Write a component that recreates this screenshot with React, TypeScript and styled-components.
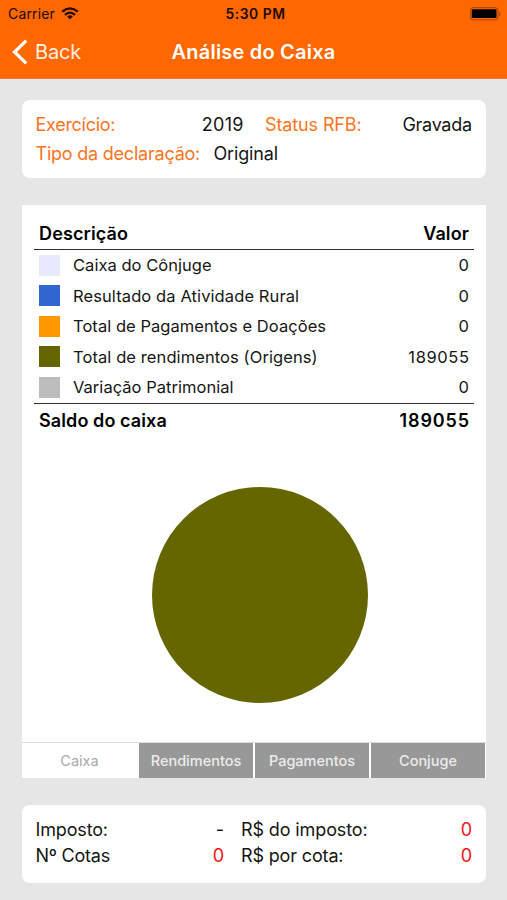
import React from 'react';
import styled, { createGlobalStyle } from 'styled-components';

const GlobalStyle = createGlobalStyle`
  * { box-sizing: border-box; }
  body {
    margin: 0;
    background: #e6e6e6;
    font-family: Inter, 'Liberation Sans', sans-serif;
    color: #161616;
  }
`;

const Screen = styled.div`
  width: 507px;
  height: 900px;
  background: #e6e6e6;
  overflow: hidden;
`;

const Header = styled.header`
  height: 79px;
  background: #ff6700;
  border-bottom: 1px solid #e87a35;
`;

const StatusBar = styled.div`
  display: grid;
  grid-template-columns: 1fr auto 1fr;
  align-items: center;
  height: 27px;
  padding: 0 5px 0 8px;
  color: #210b00;
  font-size: 14px;
`;

const Carrier = styled.div`
  display: flex;
  align-items: center;
  gap: 6px;
  letter-spacing: 0.15px;
`;

const Clock = styled.div`
  padding-left: 1px;
  font-weight: 600;
  font-size: 13.8px;
  letter-spacing: 0.55px;
`;

const BatterySlot = styled.div`
  display: flex;
  justify-content: flex-end;
`;

const NavBar = styled.nav`
  display: grid;
  grid-template-columns: 1fr auto 1fr;
  align-items: center;
  height: 50px;
  padding: 0 11px;
  color: #fff;
`;

const BackButton = styled.button`
  display: flex;
  align-items: center;
  gap: 7px;
  padding: 0;
  border: 0;
  background: none;
  color: #ffeee0;
  font: 400 20px Inter, sans-serif;
  letter-spacing: -0.2px;
`;

const Title = styled.h1`
  margin: 0;
  font-size: 20px;
  font-weight: 600;
  line-height: 24px;
  letter-spacing: 0.2px;
`;

const Content = styled.main`
  display: flex;
  flex-direction: column;
  gap: 27px;
  padding: 21px 21px 0 22px;
`;

const Card = styled.section<{ $rowHeight: number; $top: number }>`
  height: 78px;
  padding: ${p => p.$top}px 14px 0 13.5px;
  border-radius: 8px;
  background: #fff;
  font-size: 18px;
  line-height: ${p => p.$rowHeight}px;
`;

const CardRow = styled.div<{ $columns: string }>`
  display: grid;
  grid-template-columns: ${p => p.$columns};
  white-space: nowrap;
`;

const Label = styled.span<{ $accent?: boolean; $track?: number }>`
  color: ${p => (p.$accent ? '#fb7421' : 'inherit')};
  letter-spacing: ${p => p.$track ?? 0}px;
`;

const StatusLabel = styled(Label)`
  padding-left: 21.5px;
`;

const Value = styled.span<{ $red?: boolean; $left?: boolean; $track?: number }>`
  margin-right: ${p => -(p.$track ?? 0)}px;
  text-align: ${p => (p.$left ? 'left' : 'right')};
  color: ${p => (p.$red ? '#f5141b' : 'inherit')};
  letter-spacing: ${p => p.$track ?? 0}px;
`;

const TaxAmount = styled.div`
  display: flex;
  justify-content: space-between;
  padding-left: 17px;
`;

const Panel = styled.section`
  display: flex;
  flex-direction: column;
  height: 573px;
  background: #fff;
`;

const Table = styled.div`
  display: flex;
  flex-direction: column;
  margin: 12px 12px 0;
  font-size: 16.5px;
`;

const TableEdgeRow = styled.div`
  display: flex;
  justify-content: space-between;
  align-items: center;
  height: 32px;
  padding: 0 5px;
  font-size: 18px;
  font-weight: 600;
  color: #000;
`;

const Entries = styled.div`
  height: 155px;
  border-top: 1.5px solid #303030;
  border-bottom: 1.5px solid #303030;
`;

const Entry = styled.div`
  display: grid;
  grid-template-columns: 21px 1fr auto;
  column-gap: 13px;
  align-items: center;
  height: 30.5px;
  padding: 0 5px;
  white-space: nowrap;
`;

const Swatch = styled.span<{ $color: string }>`
  width: 21px;
  height: 21px;
  background: ${p => p.$color};
`;

const Chart = styled.div`
  display: flex;
  flex: 1;
  justify-content: center;
  padding: 50px 0 0 12px;
`;

const Tabs = styled.div`
  display: grid;
  grid-template-columns: 115px repeat(3, 114px);
  column-gap: 2px;
  height: 36px;
  border-top: 1px solid #dcdcdc;
`;

const Tab = styled.button<{ $active?: boolean }>`
  padding: 0;
  border: 0;
  background: ${p => (p.$active ? '#fff' : '#989898')};
  color: ${p => (p.$active ? '#aaa' : '#ececec')};
  font: ${p => (p.$active ? 400 : 500)} 14.5px Inter, sans-serif;
`;

const WifiIcon = () => (
  <svg width="18" height="13" viewBox="0 0 18 13" fill="none" stroke="#210b00" strokeWidth="2.3">
    <path d="M1.2 4.7 Q9 -2 16.8 4.7" />
    <path d="M3.9 7.8 Q9 3.4 14.1 7.8" />
    <path d="M9 12.2 L6.2 9.4 Q9 7 11.8 9.4 Z" fill="#210b00" stroke="none" />
  </svg>
);

const BatteryIcon = () => (
  <svg width="32" height="14" viewBox="0 0 32 14">
    <rect x="0.2" y="0.7" width="28" height="12.2" rx="3" fill="none" stroke="#a34200" />
    <rect x="1.7" y="2.3" width="24.8" height="8.8" rx="1.2" fill="#000" />
    <path d="M29.4 4.8 Q31.6 7 29.4 9.2 Z" fill="#a34200" />
  </svg>
);

const BackIcon = () => (
  <svg width="17" height="26" viewBox="0 0 17 26" fill="none" stroke="#fff" strokeWidth="3.3">
    <path d="M15.2 1.6 L3.5 13 L15.2 24.4" />
  </svg>
);

const entries = [
  { label: 'Caixa do Cônjuge', value: '0', color: '#e9e9fd', track: 0.04 },
  { label: 'Resultado da Atividade Rural', value: '0', color: '#3166d0', track: 0.1 },
  { label: 'Total de Pagamentos e Doações', value: '0', color: '#ff9800', track: 0.05 },
  { label: 'Total de rendimentos (Origens)', value: '189055', color: '#666600', track: 0.09 },
  { label: 'Variação Patrimonial', value: '0', color: '#bdbdbd', track: 0.03 },
];

const taxColumns = '1fr 88px 248px';

export default function App() {
  return (
    <Screen>
      <GlobalStyle />
      <Header>
        <StatusBar>
          <Carrier>Carrier <WifiIcon /></Carrier>
          <Clock>5:30 PM</Clock>
          <BatterySlot><BatteryIcon /></BatterySlot>
        </StatusBar>
        <NavBar>
          <BackButton><BackIcon />Back</BackButton>
          <Title>Análise do Caixa</Title>
        </NavBar>
      </Header>
      <Content>
        <Card $rowHeight={29} $top={10}>
          <CardRow $columns="118px 90px 1fr auto">
            <Label $accent $track={-0.28}>Exercício:</Label>
            <Value $track={0.3}>2019</Value>
            <StatusLabel $accent $track={-0.12}>Status RFB:</StatusLabel>
            <Value $track={-0.3}>Gravada</Value>
          </CardRow>
          <CardRow $columns="178px 1fr">
            <Label $accent $track={-0.22}>Tipo da declaração:</Label>
            <Value $left $track={-0.15}>Original</Value>
          </CardRow>
        </Card>
        <Panel>
          <Table>
            <TableEdgeRow>
              <Label $track={0.13}>Descrição</Label>
              <Value $track={0.15}>Valor</Value>
            </TableEdgeRow>
            <Entries>
              {entries.map(e => (
                <Entry key={e.label}>
                  <Swatch $color={e.color} />
                  <Label $track={e.track}>{e.label}</Label>
                  <Value $track={0.6}>{e.value}</Value>
                </Entry>
              ))}
            </Entries>
            <TableEdgeRow>
              <Label $track={0.1}>Saldo do caixa</Label>
              <Value $track={0.85}>189055</Value>
            </TableEdgeRow>
          </Table>
          <Chart>
            <svg width="217" height="217" viewBox="0 0 217 217">
              <circle cx="108" cy="109" r="108" fill="#666600" />
            </svg>
          </Chart>
          <Tabs>
            <Tab $active>Caixa</Tab>
            <Tab>Rendimentos</Tab>
            <Tab>Pagamentos</Tab>
            <Tab>Conjuge</Tab>
          </Tabs>
        </Panel>
        <Card $rowHeight={26} $top={12}>
          <CardRow $columns={taxColumns}>
            <Label $track={-0.15}>Imposto:</Label>
            <Value $track={1}>-</Value>
            <TaxAmount>
              <Label $track={-0.12}>R$ do imposto:</Label>
              <Value $red>0</Value>
            </TaxAmount>
          </CardRow>
          <CardRow $columns={taxColumns}>
            <Label $track={-0.22}>Nº Cotas</Label>
            <Value $red>0</Value>
            <TaxAmount>
              <Label $track={-0.15}>R$ por cota:</Label>
              <Value $red>0</Value>
            </TaxAmount>
          </CardRow>
        </Card>
      </Content>
    </Screen>
  );
}
